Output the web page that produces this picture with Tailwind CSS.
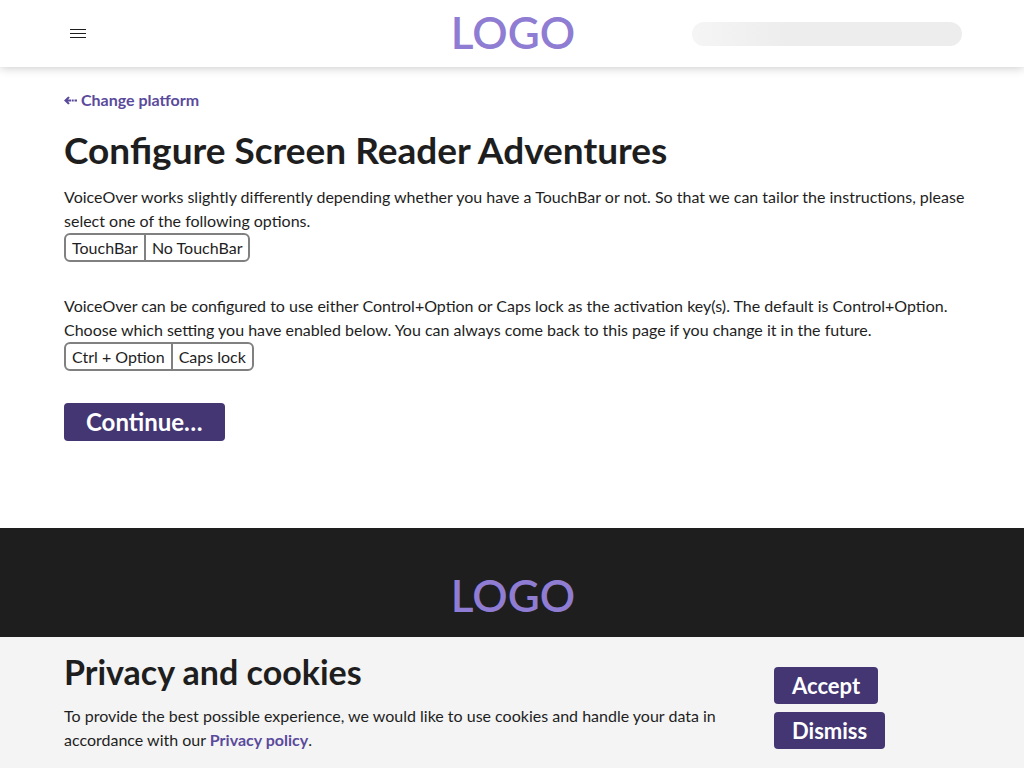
<!DOCTYPE html>
<html lang="en">
<head>
<meta charset="utf-8">
<meta name="viewport" content="width=device-width, initial-scale=1">
<title>Configure Screen Reader Adventures</title>
<script src="https://cdn.jsdelivr.net/npm/@tailwindcss/browser@4"></script>
</head>
<body class="flex min-h-screen flex-col bg-white font-['Lato',sans-serif] text-base leading-6 text-[#1e1e1e]">
<header class="grid h-[67px] grid-cols-3 items-center px-[62px] shadow-[0_0_10px_rgba(0,0,0,0.25)]">
  <button type="button" aria-label="Menu" class="flex size-8 items-center justify-center">
    <svg class="h-[9px] w-4" viewBox="0 0 16 9" fill="#1e1e1e" shape-rendering="crispEdges" aria-hidden="true"><path d="M0 0h16v1H0zM0 4h16v1H0zM0 8h16v1H0z"/></svg>
  </button>
  <a href="#" class="justify-self-center pb-1 pl-0.5 text-[44px] leading-none font-semibold text-[#8f7cd3]">LOGO</a>
  <div class="h-6 w-[270px] justify-self-end rounded-full bg-linear-to-r from-[#f5f5f5] to-[#ededed] to-35%"></div>
</header>
<main class="pt-[21px] pr-12 pb-[87px] pl-16">
  <a href="#" class="flex w-fit items-center gap-1 font-bold text-[#5a4a9c]">
    <svg class="h-[9px] w-[13px]" viewBox="0 0 13 9" fill="currentColor" aria-hidden="true"><path d="M0 4.500 4.200 0.500 5.800 1.600 4 3.500H7v2H4L5.800 7.400 4.200 8.500zM7.700 3.500h2v2h-2zM10.500 3.500h2.500v2h-2.500z"/></svg>
    Change platform</a>
  <h1 class="mt-[15px] text-[37px] leading-[46px] font-bold">Configure Screen Reader Adventures</h1>
  <fieldset class="mt-3">
    <legend>VoiceOver works slightly differently depending whether you have a TouchBar or not. So that we can tailor the instructions, please select one of the following options.</legend>
    <div class="inline-flex divide-x-2 divide-[#808080] rounded-md border-2 border-[#808080] align-top">
      <label class="cursor-pointer px-1.5 leading-[25px]"><input type="radio" name="touchbar" class="sr-only">TouchBar</label>
      <label class="cursor-pointer px-1.5 leading-[25px]"><input type="radio" name="touchbar" class="sr-only">No TouchBar</label>
    </div>
  </fieldset>
  <fieldset class="mt-8">
    <legend>VoiceOver can be configured to use either Control+Option or Caps lock as the activation key(s). The default is Control+Option. Choose which setting you have enabled below. You can always come back to this page if you change it in the future.</legend>
    <div class="inline-flex divide-x-2 divide-[#808080] rounded-md border-2 border-[#808080] align-top">
      <label class="cursor-pointer px-1.5 leading-[25px]"><input type="radio" name="keys" class="sr-only">Ctrl + Option</label>
      <label class="cursor-pointer px-1.5 leading-[25px]"><input type="radio" name="keys" class="sr-only">Caps lock</label>
    </div>
  </fieldset>
  <button type="button" class="mt-8 block rounded bg-[#433673] px-[22px] text-2xl leading-[38px] font-bold text-white">Continue…</button>
</main>
<footer class="flex flex-1 justify-center bg-[#1e1e1e] pt-[45px]">
  <a href="#" class="h-11 pl-0.5 text-[44px] leading-none font-semibold text-[#8f7cd3]">LOGO</a>
</footer>
<section aria-labelledby="privacy" class="fixed inset-x-0 bottom-0 flex items-end gap-10 bg-[#f4f4f4] px-16 pt-[11px] pb-4">
  <div class="w-[670px]">
    <h2 id="privacy" class="text-[34px] leading-[48px] font-bold">Privacy and cookies</h2>
    <p class="mt-2">To provide the best possible experience, we would like to use cookies and handle your data in accordance with our <a href="#" class="font-bold text-[#5a4a9c]">Privacy policy</a>.</p>
  </div>
  <div class="flex flex-col items-start gap-2 pb-[3px]">
    <button type="button" class="rounded bg-[#433673] px-[18px] text-[22px] leading-[37px] font-bold text-white">Accept</button>
    <button type="button" class="rounded bg-[#433673] px-[18px] text-[22px] leading-[37px] font-bold text-white">Dismiss</button>
  </div>
</section>
</body>
</html>
